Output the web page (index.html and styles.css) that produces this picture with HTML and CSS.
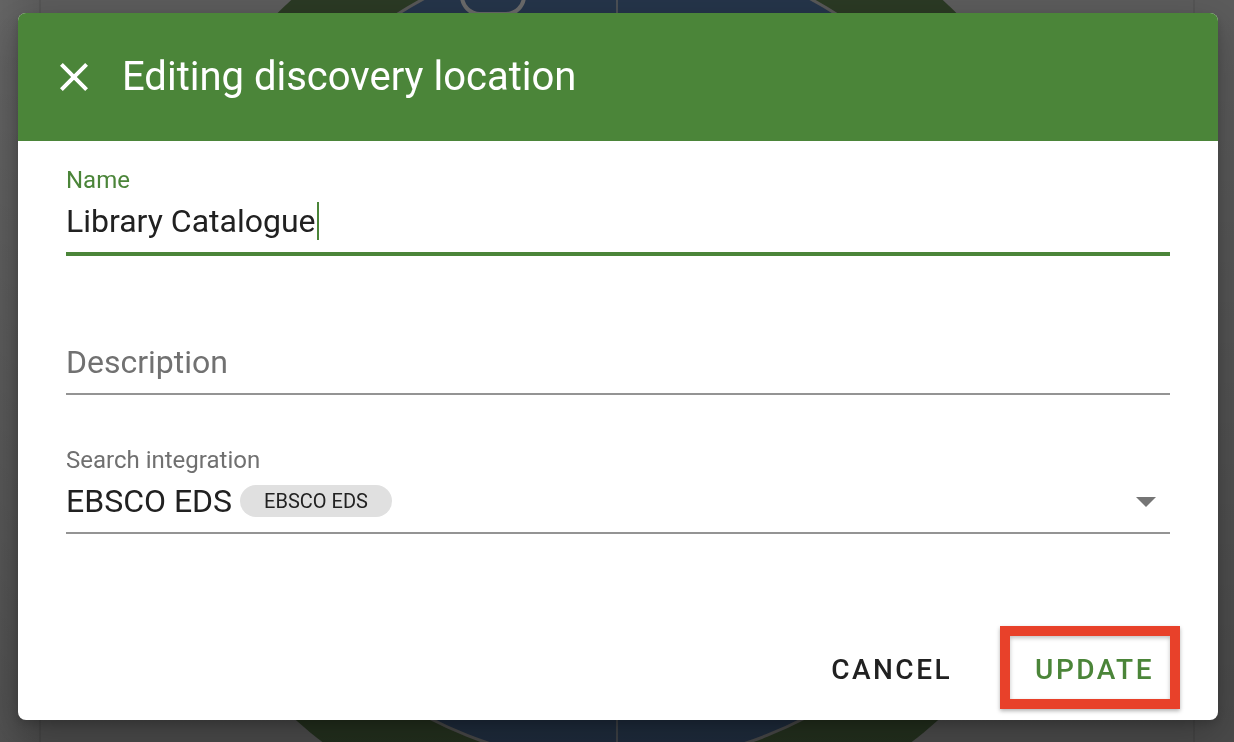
FILE: index.html
```html
<!DOCTYPE html>
<html lang="en">
<head>
<meta charset="utf-8">
<title>Editing discovery location</title>
<link rel="stylesheet" href="styles.css">
</head>
<body>
<div class="backdrop" aria-hidden="true">
  <svg width="1234" height="742" viewBox="0 0 1234 742">
    <defs>
      <linearGradient id="shade" x1="0" y1="0" x2="0" y2="1">
        <stop offset="0" stop-color="#000" stop-opacity="0"/>
        <stop offset="1" stop-color="#000" stop-opacity="0.2"/>
      </linearGradient>
      <linearGradient id="side" x1="0" y1="0" x2="1" y2="0">
        <stop offset="0" stop-color="#fff" stop-opacity="0.05"/>
        <stop offset="1" stop-color="#fff" stop-opacity="0"/>
      </linearGradient>
    </defs>
    <rect x="0" y="0" width="1234" height="742" fill="#5c5c5c"/>
    <rect x="0" y="0" width="40" height="742" fill="url(#side)"/>
    <line x1="40" y1="0" x2="40" y2="742" stroke="#555" stroke-width="2"/>
    <line x1="1194" y1="0" x2="1194" y2="742" stroke="#555" stroke-width="2"/>
    <circle cx="617" cy="358" r="484" fill="#2b3a24"/>
    <circle cx="617" cy="357" r="407" fill="#25354a" stroke="#585858" stroke-width="3"/>
    <line x1="617" y1="0" x2="617" y2="742" stroke="#5a5a5a" stroke-width="1.5"/>
    <rect x="462" y="-30" width="62" height="44" rx="18" fill="none" stroke="#6a6a6a" stroke-width="4"/>
    <rect x="0" y="0" width="1234" height="742" fill="url(#shade)"/>
  </svg>
</div>

<div class="dialog">
  <header class="dialog-header">
    <span class="close-icon">
      <svg width="48" height="48" viewBox="0 0 24 24"><path fill="#fff" d="M19 6.41L17.59 5 12 10.59 6.41 5 5 6.41 10.59 12 5 17.59 6.41 19 12 13.41 17.59 19 19 17.59 13.41 12z"/></svg>
    </span>
    <h1 class="dialog-title">Editing discovery location</h1>
  </header>

  <div class="dialog-body">
    <div class="field">
      <div class="field-label focused">Name</div>
      <div class="field-value">Library Catalogue<span class="caret"></span></div>
      <div class="field-line focused"></div>
    </div>

    <div class="field">
      <div class="field-label"></div>
      <div class="field-value placeholder">Description</div>
      <div class="field-line"></div>
    </div>

    <div class="field">
      <div class="field-label">Search integration</div>
      <div class="field-value select-value">
        <span>EBSCO EDS</span>
        <span class="chip">EBSCO EDS</span>
        <span class="arrow"></span>
      </div>
      <div class="field-line"></div>
    </div>
  </div>

  <div class="dialog-actions">
    <button class="btn">CANCEL</button>
    <span class="highlight-wrap">
      <button class="btn primary">UPDATE</button>
      <span class="highlight"></span>
    </span>
  </div>
</div>
</body>
</html>
```

FILE: styles.css
```css
* { box-sizing: border-box; }

html, body {
  margin: 0;
  padding: 0;
  width: 1234px;
  height: 742px;
  overflow: hidden;
}

body {
  font-family: Roboto, "Noto Sans", "Liberation Sans", sans-serif;
  padding: 13px 18px 0 18px;
  background: #555;
}

.backdrop {
  position: fixed;
  inset: 0;
  z-index: 0;
}

.backdrop svg { display: block; }

.dialog {
  position: relative;
  z-index: 1;
  width: 1200px;
  height: 707px;
  background: #fff;
  border-radius: 8px;
  overflow: hidden;
  box-shadow: 0 14px 40px rgba(0,0,0,0.25), 0 4px 10px rgba(0,0,0,0.15);
  display: flex;
  flex-direction: column;
}

.dialog-header {
  height: 128px;
  background: #4b8539;
  display: flex;
  align-items: center;
  padding-left: 32px;
  flex-shrink: 0;
}

.close-icon {
  width: 48px;
  height: 48px;
  display: flex;
}

.dialog-title {
  margin: 0 0 0 24px;
  color: #fff;
  font-size: 40px;
  font-weight: 400;
  line-height: 48px;
}

.dialog-body {
  padding: 25px 48px 0 48px;
  display: flex;
  flex-direction: column;
  gap: 51px;
}

.field {
  display: flex;
  flex-direction: column;
}

.field-label {
  height: 28px;
  font-size: 24px;
  line-height: 28px;
  color: #707070;
}

.field-label.focused { color: #4b8539; }

.field-value {
  margin-top: 7px;
  height: 40px;
  font-size: 32px;
  line-height: 40px;
  color: #212121;
  display: flex;
  align-items: center;
  white-space: nowrap;
}

.field-value.placeholder { color: #717171; }

.caret {
  display: inline-block;
  width: 2px;
  height: 38px;
  background: #4b8539;
  margin-left: 1px;
}

.chip {
  margin-left: 8px;
  height: 32px;
  padding: 0 24px;
  border-radius: 16px;
  background: #e0e0e0;
  color: #222;
  font-size: 20px;
  line-height: 32px;
}

.arrow {
  margin-left: auto;
  margin-right: 14px;
  margin-top: 2px;
  width: 0;
  height: 0;
  border-left: 10px solid transparent;
  border-right: 10px solid transparent;
  border-top: 10px solid #757575;
}

.field-line {
  margin-top: 11px;
  height: 2px;
  background: #949494;
}

.field-line.focused {
  height: 4px;
  background: #4b8539;
}

.dialog-actions {
  margin-top: auto;
  margin-bottom: 15px;
  padding-right: 48px;
  display: flex;
  justify-content: flex-end;
  align-items: center;
  gap: 51px;
}

.btn {
  height: 72px;
  padding: 0 16px;
  border: none;
  background: transparent;
  font-family: Roboto, "Noto Sans", "Liberation Sans", sans-serif;
  font-size: 28px;
  font-weight: 500;
  letter-spacing: 2.5px;
  color: #212121;
  cursor: pointer;
}

.btn.primary { color: #4b8539; }

.highlight-wrap {
  position: relative;
  display: inline-flex;
}

.highlight {
  position: absolute;
  left: -19px;
  right: -10px;
  top: -7px;
  bottom: -4px;
  border: 10px solid #e8412a;
  box-shadow: 0 2px 4px rgba(0,0,0,0.3), inset 0 2px 4px rgba(0,0,0,0.25);
  pointer-events: none;
}
```
